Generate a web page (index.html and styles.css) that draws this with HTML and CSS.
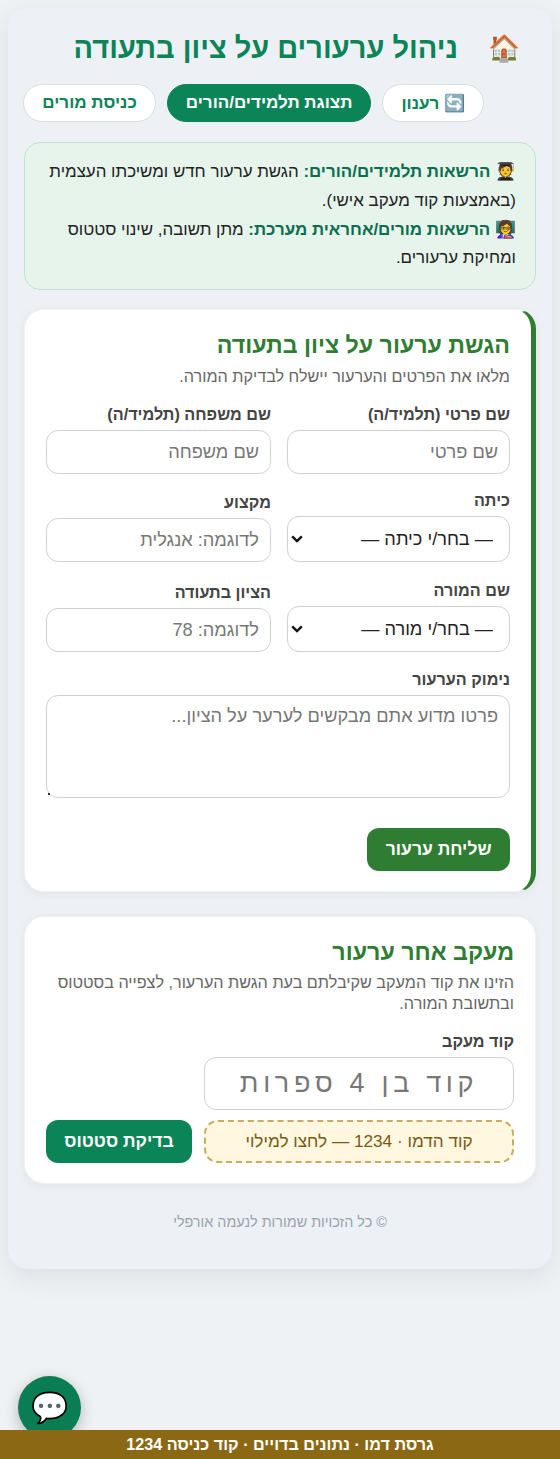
FILE: index.html
```html
<!DOCTYPE html>
<html lang="he" dir="rtl">
<head>
<meta charset="utf-8">
<title>ניהול ערעורים על ציון בתעודה</title>
<link rel="stylesheet" href="styles.css">
</head>
<body>
<main class="shell">
  <header class="head">
    <span class="head-icon">🏠</span>
    <h1 class="head-title">ניהול ערעורים על ציון בתעודה</h1>
  </header>
  <nav class="tabs">
    <button class="pill" type="button">🔄 רענון</button>
    <button class="pill pill-active" type="button">תצוגת תלמידים/הורים</button>
    <button class="pill" type="button">כניסת מורים</button>
  </nav>
  <section class="info">
    <div>🧑‍🎓 <strong>הרשאות תלמידים/הורים:</strong> הגשת ערעור חדש ומשיכתו העצמית (באמצעות קוד מעקב אישי).</div>
    <div>👩‍🏫 <strong>הרשאות מורים/אחראית מערכת:</strong> מתן תשובה, שינוי סטטוס ומחיקת ערעורים.</div>
  </section>
  <section class="card card-accent">
    <h2 class="card-title">הגשת ערעור על ציון בתעודה</h2>
    <p class="card-sub">מלאו את הפרטים והערעור יישלח לבדיקת המורה.</p>
    <form class="form-grid">
      <label class="field"><span class="field-label">שם פרטי (תלמיד/ה)</span><input class="control" placeholder="שם פרטי"></label>
      <label class="field"><span class="field-label">שם משפחה (תלמיד/ה)</span><input class="control" placeholder="שם משפחה"></label>
      <label class="field"><span class="field-label">כיתה</span>
        <span class="select-wrap"><select class="control control-select"><option>— בחר/י כיתה —</option></select>
        <svg class="select-arrow" viewBox="0 0 12 8" aria-hidden="true"><path d="M1.2 1.4 6 6 10.8 1.4"/></svg></span></label>
      <label class="field"><span class="field-label">מקצוע</span><input class="control" placeholder="לדוגמה: אנגלית"></label>
      <label class="field field-low"><span class="field-label">שם המורה</span>
        <span class="select-wrap"><select class="control control-select"><option>— בחר/י מורה —</option></select>
        <svg class="select-arrow" viewBox="0 0 12 8" aria-hidden="true"><path d="M1.2 1.4 6 6 10.8 1.4"/></svg></span></label>
      <label class="field field-low"><span class="field-label">הציון בתעודה</span><input class="control" placeholder="לדוגמה: 78"></label>
      <label class="field field-wide"><span class="field-label">נימוק הערעור</span><span class="area-wrap"><textarea class="control control-area" placeholder="פרטו מדוע אתם מבקשים לערער על הציון..."></textarea></span></label>
    </form>
    <button class="action action-submit" type="button">שליחת ערעור</button>
  </section>
  <section class="card card-track">
    <h2 class="card-title">מעקב אחר ערעור</h2>
    <p class="card-sub">הזינו את קוד המעקב שקיבלתם בעת הגשת הערעור, לצפייה בסטטוס ובתשובת המורה.</p>
    <div class="track-row">
      <div class="track-field">
        <label class="field"><span class="field-label">קוד מעקב</span><input class="control control-code" placeholder="קוד בן 4 ספרות"></label>
        <button class="demo-chip" type="button">קוד הדמו · 1234 — לחצו למילוי</button>
      </div>
      <button class="action action-check" type="button">בדיקת סטטוס</button>
    </div>
  </section>
  <footer class="foot">© כל הזכויות שמורות לנעמה אורפלי</footer>
</main>
<button class="fab" type="button">💬</button>
<div class="demo-bar">גרסת דמו · נתונים בדויים · קוד כניסה 1234</div>
</body>
</html>
```
FILE: styles.css
```css
* { box-sizing: border-box; }
html, body { height: 100%; }
body {
  margin: 0;
  padding: 8px;
  background: #eef2f5;
  font-family: "Liberation Sans", "Noto Sans", sans-serif;
  color: #222;
  overflow: hidden;
}
.shell {
  height: 1261px;
  padding: 16px;
  background: #edf1f5;
  border-radius: 20px;
  box-shadow: 0 8px 28px rgba(0, 0, 0, 0.08);
}
.head {
  display: flex;
  align-items: center;
  gap: 30px;
  height: 47px;
  padding-top: 1px;
  padding-right: 16px;
}
.head-icon { font-size: 26px; line-height: 46px; }
.head-title {
  margin: 0;
  font-size: 29px;
  line-height: 46px;
  font-weight: 700;
  color: #0b8457;
}
.tabs {
  display: flex;
  gap: 11px;
  margin-top: 13px;
  padding-right: 52px;
}
.pill {
  flex: none;
  height: 38px;
  padding: 0 18px;
  border: 1px solid #d5e2dc;
  border-radius: 19px;
  background: #fff;
  color: #0b8457;
  white-space: nowrap;
  font: 700 17px "Liberation Sans", sans-serif;
}
.pill-active { background: #0b8457; border-color: #0b8457; color: #fff; }
.info {
  margin-top: 20px;
  height: 148px;
  padding: 15px 19px 0 16px;
  background: #e6f4ec;
  border: 1px solid #c2e2d2;
  border-radius: 16px;
  font-size: 16.9px;
  line-height: 28.8px;
  color: #222;
}
.info strong { color: #0b6e4f; font-weight: 700; }
.card {
  background: #fff;
  border: 1px solid #f0f3f5;
  border-radius: 20px;
  padding: 21px 21px;
  box-shadow: 0 2px 10px rgba(0, 0, 0, 0.06);
}
.card-accent {
  height: 583px;
  margin-top: 19px;
  border-right: 5px solid #2e7d32;
}
.card-track { height: 268px; margin-top: 24px; }
.card-title {
  margin: 0;
  font-size: 23.2px;
  line-height: 28px;
  font-weight: 700;
  color: #2e7d32;
}
.card-sub {
  margin: 7px 0 0;
  font-size: 16.2px;
  line-height: 21px;
  color: #666;
}
.card-track .card-sub { margin-top: 6px; }
.form-grid {
  display: grid;
  grid-template-columns: 223px 225px;
  justify-content: space-between;
  column-gap: 16px;
  row-gap: 16px;
  align-items: end;
  margin-top: 17px;
}
.field { display: flex; flex-direction: column; }
.field-low { margin-top: 2px; }
.field-wide { grid-column: 1 / -1; margin-top: 1px; }
.field-label {
  margin-bottom: 6px;
  font-size: 16.2px;
  line-height: 20px;
  font-weight: 700;
  color: #444;
}
.control {
  display: block;
  width: 100%;
  height: 44px;
  padding: 0 11px;
  border: 1px solid #ccd2d6;
  border-radius: 12px;
  background: #fff;
  font: 18.2px "Liberation Sans", sans-serif;
  color: #222;
}
.control::placeholder { color: #777; opacity: 1; }
.control-select {
  height: 46px;
  padding: 0 16px 0 24px;
  appearance: none;
  -webkit-appearance: none;
}
.control-area { height: 103px; padding: 10px 11px; resize: none; }
.select-wrap, .area-wrap { position: relative; display: block; }
.select-arrow {
  position: absolute;
  left: 4px;
  top: 19px;
  width: 12px;
  height: 8px;
  pointer-events: none;
}
.select-arrow path {
  fill: none;
  stroke: #111;
  stroke-width: 2.4;
}
.area-wrap::after {
  content: "";
  position: absolute;
  left: 2px;
  bottom: 3px;
  width: 2px;
  height: 2px;
  background: #333;
}
.action {
  height: 43px;
  padding: 0 18.5px;
  border: 0;
  border-radius: 12px;
  color: #fff;
  font: 700 17.5px "Liberation Sans", sans-serif;
}
.action-submit { display: block; margin-top: 30px; background: #2e7d32; }
.action-check { width: 146px; padding: 0; background: #0b8457; }
.track-row {
  display: flex;
  align-items: flex-end;
  justify-content: space-between;
  margin-top: 17px;
}
.track-field { width: 310px; display: flex; flex-direction: column; gap: 10px; }
.control-code {
  height: 53px;
  padding: 0 18px;
  font-size: 27px;
  letter-spacing: 4.7px;
  text-align: center;
}
.demo-chip {
  height: 43px;
  padding: 0;
  border: 2px dashed #c9ab62;
  border-radius: 14px;
  background: #fff7e0;
  color: #7a5a10;
  font: 17.2px "Liberation Sans", sans-serif;
}
.foot {
  margin-top: 28px;
  text-align: center;
  font-size: 14.4px;
  line-height: 20px;
  color: #9aa3aa;
}
.fab {
  position: fixed;
  left: 18px;
  bottom: 20px;
  width: 63px;
  height: 63px;
  padding: 0;
  border: 0;
  border-radius: 50%;
  background: #0b7d54;
  font-size: 30px;
  box-shadow: 0 4px 14px rgba(0, 0, 0, 0.25);
}
.demo-bar {
  position: fixed;
  left: 0;
  right: 0;
  bottom: 0;
  height: 29px;
  background: #8b6914;
  color: #fff;
  text-align: center;
  font-size: 16.2px;
  line-height: 29px;
  font-weight: 700;
}
```
